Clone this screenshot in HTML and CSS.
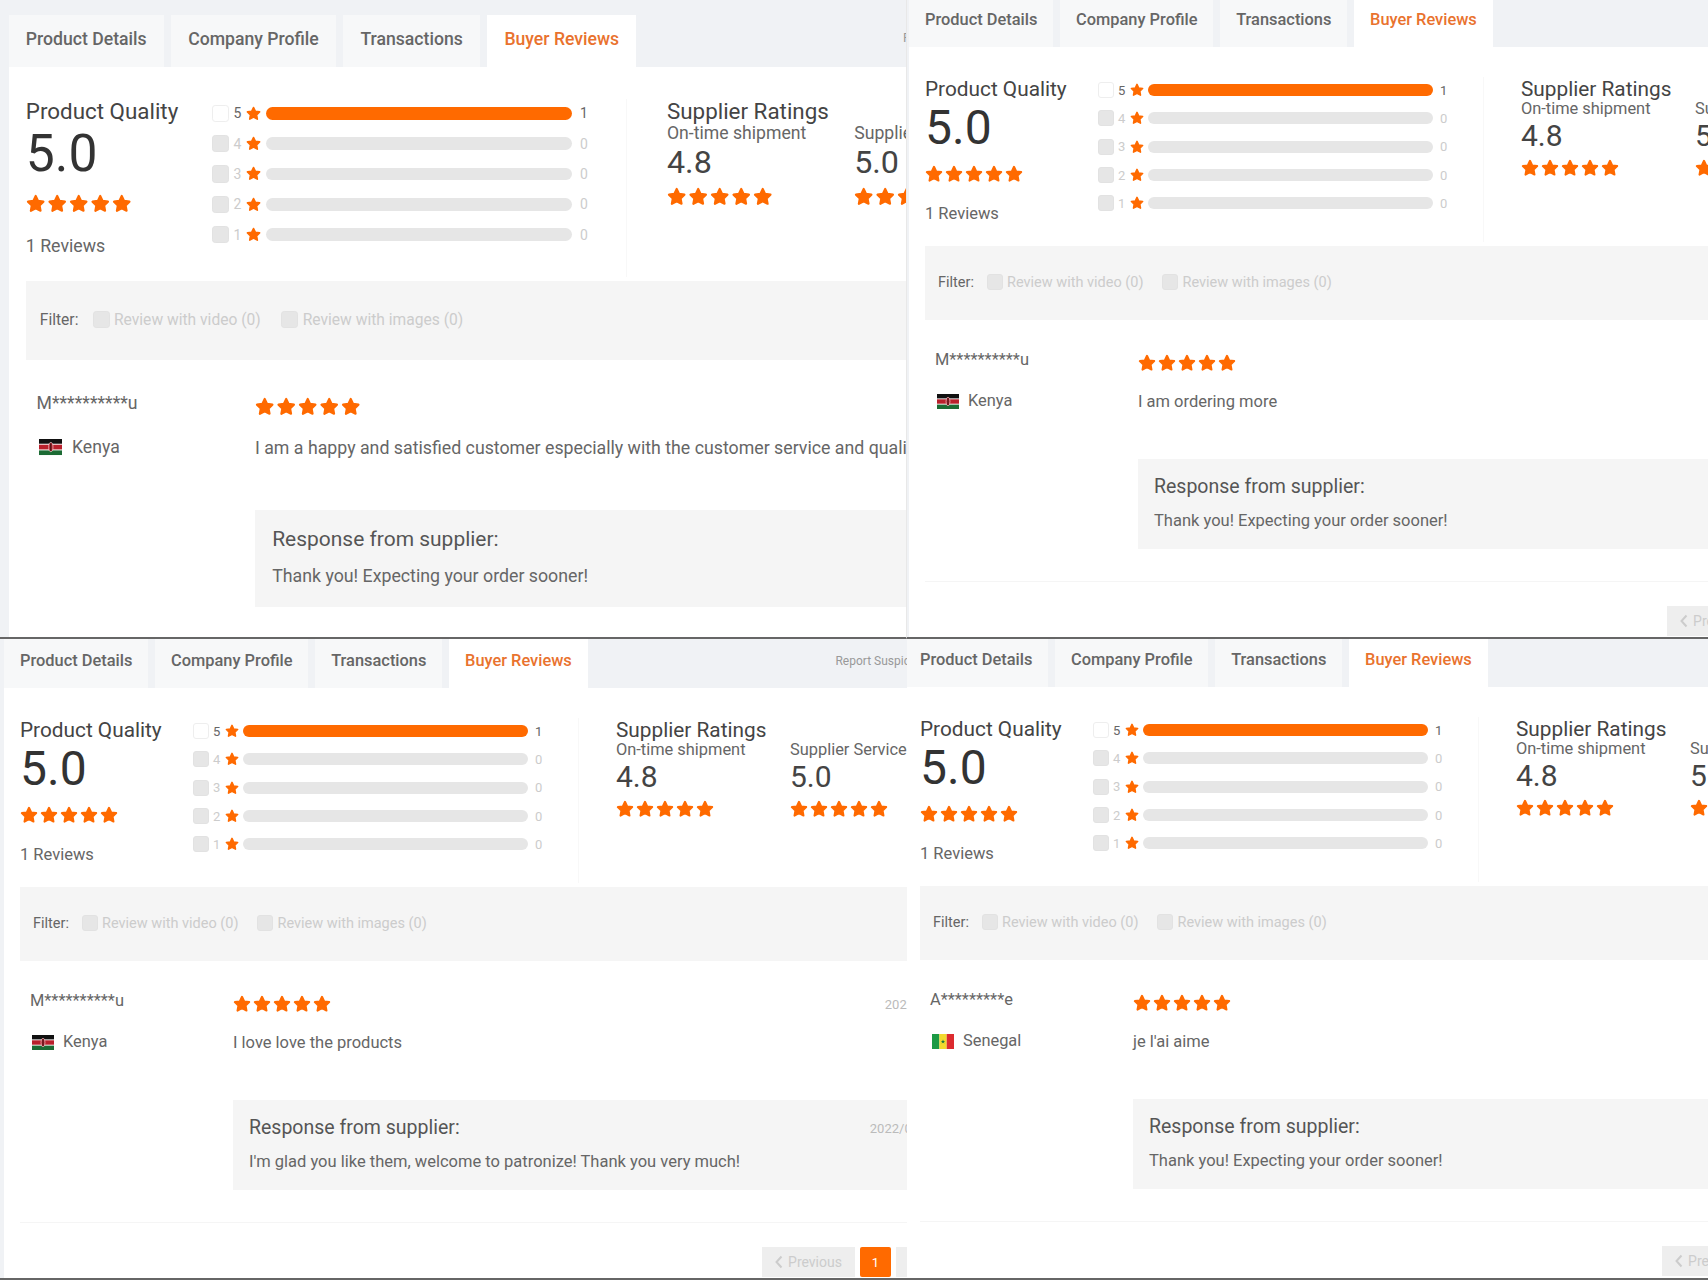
FILE: index.html
```html
<!DOCTYPE html>
<html lang="en">
<head>
    <meta charset="UTF-8">
    <title>Buyer Reviews</title>
    <link rel="stylesheet" href="styles.css">
</head>
<body>

    <!-- iconos compartidos -->
    <svg class="defs" aria-hidden="true">
        <symbol id="star" viewBox="0 0 18 18">
            <path d="M9 1.800l2.200 4.600 5 .7-3.600 3.500.9 5L9 13.200l-4.500 2.400.9-5L1.800 7.100l5-.7z" fill="#ff6a00" stroke="#ff6a00" stroke-width="2" stroke-linejoin="round"/>
        </symbol>
        <symbol id="five-stars" viewBox="0 0 98 18">
            <use href="#star" x="0" width="18" height="18"/>
            <use href="#star" x="20" width="18" height="18"/>
            <use href="#star" x="40" width="18" height="18"/>
            <use href="#star" x="60" width="18" height="18"/>
            <use href="#star" x="80" width="18" height="18"/>
        </symbol>
        <symbol id="flag-ke" viewBox="0 0 22 15">
            <rect width="22" height="15" fill="#fff"/>
            <rect width="22" height="4.400" fill="#111"/>
            <rect y="5.300" width="22" height="4.400" fill="#b9202c"/>
            <rect y="10.600" width="22" height="4.400" fill="#1c6b34"/>
            <ellipse cx="11" cy="7.500" rx="2" ry="4.300" fill="#b9202c" stroke="#fff" stroke-width=".5"/>
            <rect x="10.600" y="4" width=".8" height="7" fill="#111"/>
        </symbol>
        <symbol id="flag-sn" viewBox="0 0 22 15">
            <rect width="7.400" height="15" fill="#1c9a45"/>
            <rect x="7.400" width="7.300" height="15" fill="#f2d92e"/>
            <rect x="14.700" width="7.300" height="15" fill="#dc2b2f"/>
            <path d="M11 5.500l.6 1.500h1.500l-1.200 1 .5 1.500-1.400-.9-1.400.9.500-1.500-1.200-1h1.500z" fill="#1c7a3c"/>
        </symbol>
        <symbol id="chevron" viewBox="0 0 8 14">
            <path d="M6.500 1.500L1.500 7l5 5.500" fill="none" stroke="#ccc" stroke-width="2"/>
        </symbol>
    </svg>

    <div class="board">

        <!-- arriba izquierda -->
        <section class="pane pane-tl">
            <div class="sheet">
                <nav class="tabbar">
                    <a class="tab">Product Details</a>
                    <a class="tab">Company Profile</a>
                    <a class="tab">Transactions</a>
                    <a class="tab tab-active">Buyer Reviews</a>
                    <a class="report">Report Suspicious Activity</a>
                </nav>
                <div class="content">
                    <div class="summary">
                        <div class="quality">
                            <h3 class="summary-title">Product Quality</h3>
                            <div class="score">5.0</div>
                            <svg class="stars"><use href="#five-stars"/></svg>
                            <div class="review-count">1 Reviews</div>
                        </div>
                        <div class="bars">
                            <div class="bar-row bar-row-on"><span class="check check-on"></span><span class="bar-label">5</span><svg class="bar-star"><use href="#star"/></svg><span class="bar"><span class="bar-fill"></span></span><span class="bar-count">1</span></div>
                            <div class="bar-row"><span class="check"></span><span class="bar-label">4</span><svg class="bar-star"><use href="#star"/></svg><span class="bar"></span><span class="bar-count">0</span></div>
                            <div class="bar-row"><span class="check"></span><span class="bar-label">3</span><svg class="bar-star"><use href="#star"/></svg><span class="bar"></span><span class="bar-count">0</span></div>
                            <div class="bar-row"><span class="check"></span><span class="bar-label">2</span><svg class="bar-star"><use href="#star"/></svg><span class="bar"></span><span class="bar-count">0</span></div>
                            <div class="bar-row"><span class="check"></span><span class="bar-label">1</span><svg class="bar-star"><use href="#star"/></svg><span class="bar"></span><span class="bar-count">0</span></div>
                        </div>
                        <div class="supplier">
                            <h3 class="summary-title">Supplier Ratings</h3>
                            <div class="metrics">
                                <div class="metric">
                                    <div class="metric-name">On-time shipment</div>
                                    <div class="metric-score">4.8</div>
                                    <svg class="stars"><use href="#five-stars"/></svg>
                                </div>
                                <div class="metric">
                                    <div class="metric-name">Supplier Service</div>
                                    <div class="metric-score">5.0</div>
                                    <svg class="stars"><use href="#five-stars"/></svg>
                                </div>
                            </div>
                        </div>
                    </div>
                    <div class="filter">
                        <span class="filter-label">Filter:</span>
                        <span class="check"></span><span class="filter-option">Review with video (0)</span>
                        <span class="check"></span><span class="filter-option">Review with images (0)</span>
                    </div>
                    <div class="review">
                        <div class="buyer">
                            <div class="buyer-name">M**********u</div>
                            <div class="buyer-country"><svg class="flag"><use href="#flag-ke"/></svg>Kenya</div>
                        </div>
                        <div class="review-body">
                            <div class="review-top"><svg class="stars"><use href="#five-stars"/></svg><span class="date">2022/06/18</span></div>
                            <p class="review-text">I am a happy and satisfied customer especially with the customer service and quality of the products</p>
                            <div class="response">
                                <div class="response-top"><span class="response-title">Response from supplier:</span><span class="date">2022/06/18</span></div>
                                <p class="response-text">Thank you! Expecting your order sooner!</p>
                            </div>
                        </div>
                    </div>
                </div>
            </div>
        </section>

        <!-- arriba derecha -->
        <section class="pane pane-tr">
            <div class="sheet">
                <nav class="tabbar">
                    <a class="tab">Product Details</a>
                    <a class="tab">Company Profile</a>
                    <a class="tab">Transactions</a>
                    <a class="tab tab-active">Buyer Reviews</a>
                    <a class="report">Report Suspicious Activity</a>
                </nav>
                <div class="content">
                    <div class="summary">
                        <div class="quality">
                            <h3 class="summary-title">Product Quality</h3>
                            <div class="score">5.0</div>
                            <svg class="stars"><use href="#five-stars"/></svg>
                            <div class="review-count">1 Reviews</div>
                        </div>
                        <div class="bars">
                            <div class="bar-row bar-row-on"><span class="check check-on"></span><span class="bar-label">5</span><svg class="bar-star"><use href="#star"/></svg><span class="bar"><span class="bar-fill"></span></span><span class="bar-count">1</span></div>
                            <div class="bar-row"><span class="check"></span><span class="bar-label">4</span><svg class="bar-star"><use href="#star"/></svg><span class="bar"></span><span class="bar-count">0</span></div>
                            <div class="bar-row"><span class="check"></span><span class="bar-label">3</span><svg class="bar-star"><use href="#star"/></svg><span class="bar"></span><span class="bar-count">0</span></div>
                            <div class="bar-row"><span class="check"></span><span class="bar-label">2</span><svg class="bar-star"><use href="#star"/></svg><span class="bar"></span><span class="bar-count">0</span></div>
                            <div class="bar-row"><span class="check"></span><span class="bar-label">1</span><svg class="bar-star"><use href="#star"/></svg><span class="bar"></span><span class="bar-count">0</span></div>
                        </div>
                        <div class="supplier">
                            <h3 class="summary-title">Supplier Ratings</h3>
                            <div class="metrics">
                                <div class="metric">
                                    <div class="metric-name">On-time shipment</div>
                                    <div class="metric-score">4.8</div>
                                    <svg class="stars"><use href="#five-stars"/></svg>
                                </div>
                                <div class="metric">
                                    <div class="metric-name">Supplier Service</div>
                                    <div class="metric-score">5.0</div>
                                    <svg class="stars"><use href="#five-stars"/></svg>
                                </div>
                            </div>
                        </div>
                    </div>
                    <div class="filter">
                        <span class="filter-label">Filter:</span>
                        <span class="check"></span><span class="filter-option">Review with video (0)</span>
                        <span class="check"></span><span class="filter-option">Review with images (0)</span>
                    </div>
                    <div class="review">
                        <div class="buyer">
                            <div class="buyer-name">M**********u</div>
                            <div class="buyer-country"><svg class="flag"><use href="#flag-ke"/></svg>Kenya</div>
                        </div>
                        <div class="review-body">
                            <div class="review-top"><svg class="stars"><use href="#five-stars"/></svg><span class="date">2022/06/18</span></div>
                            <p class="review-text">I am ordering more</p>
                            <div class="response">
                                <div class="response-top"><span class="response-title">Response from supplier:</span><span class="date">2022/06/18</span></div>
                                <p class="response-text">Thank you! Expecting your order sooner!</p>
                            </div>
                        </div>
                    </div>
                    <div class="pager">
                        <a class="page-btn"><svg class="chevron"><use href="#chevron"/></svg>Previous</a>
                        <a class="page-num">1</a>
                        <a class="page-btn">Next</a>
                    </div>
                </div>
            </div>
        </section>

        <!-- abajo izquierda -->
        <section class="pane pane-bl">
            <div class="sheet">
                <nav class="tabbar">
                    <a class="tab">Product Details</a>
                    <a class="tab">Company Profile</a>
                    <a class="tab">Transactions</a>
                    <a class="tab tab-active">Buyer Reviews</a>
                    <a class="report">Report Suspicious Activity</a>
                </nav>
                <div class="content">
                    <div class="summary">
                        <div class="quality">
                            <h3 class="summary-title">Product Quality</h3>
                            <div class="score">5.0</div>
                            <svg class="stars"><use href="#five-stars"/></svg>
                            <div class="review-count">1 Reviews</div>
                        </div>
                        <div class="bars">
                            <div class="bar-row bar-row-on"><span class="check check-on"></span><span class="bar-label">5</span><svg class="bar-star"><use href="#star"/></svg><span class="bar"><span class="bar-fill"></span></span><span class="bar-count">1</span></div>
                            <div class="bar-row"><span class="check"></span><span class="bar-label">4</span><svg class="bar-star"><use href="#star"/></svg><span class="bar"></span><span class="bar-count">0</span></div>
                            <div class="bar-row"><span class="check"></span><span class="bar-label">3</span><svg class="bar-star"><use href="#star"/></svg><span class="bar"></span><span class="bar-count">0</span></div>
                            <div class="bar-row"><span class="check"></span><span class="bar-label">2</span><svg class="bar-star"><use href="#star"/></svg><span class="bar"></span><span class="bar-count">0</span></div>
                            <div class="bar-row"><span class="check"></span><span class="bar-label">1</span><svg class="bar-star"><use href="#star"/></svg><span class="bar"></span><span class="bar-count">0</span></div>
                        </div>
                        <div class="supplier">
                            <h3 class="summary-title">Supplier Ratings</h3>
                            <div class="metrics">
                                <div class="metric">
                                    <div class="metric-name">On-time shipment</div>
                                    <div class="metric-score">4.8</div>
                                    <svg class="stars"><use href="#five-stars"/></svg>
                                </div>
                                <div class="metric">
                                    <div class="metric-name">Supplier Service</div>
                                    <div class="metric-score">5.0</div>
                                    <svg class="stars"><use href="#five-stars"/></svg>
                                </div>
                            </div>
                        </div>
                    </div>
                    <div class="filter">
                        <span class="filter-label">Filter:</span>
                        <span class="check"></span><span class="filter-option">Review with video (0)</span>
                        <span class="check"></span><span class="filter-option">Review with images (0)</span>
                    </div>
                    <div class="review">
                        <div class="buyer">
                            <div class="buyer-name">M**********u</div>
                            <div class="buyer-country"><svg class="flag"><use href="#flag-ke"/></svg>Kenya</div>
                        </div>
                        <div class="review-body">
                            <div class="review-top"><svg class="stars"><use href="#five-stars"/></svg><span class="date">2022/06/18</span></div>
                            <p class="review-text">I love love the products</p>
                            <div class="response">
                                <div class="response-top"><span class="response-title">Response from supplier:</span><span class="date">2022/06/18</span></div>
                                <p class="response-text">I'm glad you like them, welcome to patronize! Thank you very much!</p>
                            </div>
                        </div>
                    </div>
                    <div class="pager">
                        <a class="page-btn"><svg class="chevron"><use href="#chevron"/></svg>Previous</a>
                        <a class="page-num">1</a>
                        <a class="page-btn">Next</a>
                    </div>
                </div>
            </div>
        </section>

        <!-- abajo derecha -->
        <section class="pane pane-br">
            <div class="sheet">
                <nav class="tabbar">
                    <a class="tab">Product Details</a>
                    <a class="tab">Company Profile</a>
                    <a class="tab">Transactions</a>
                    <a class="tab tab-active">Buyer Reviews</a>
                    <a class="report">Report Suspicious Activity</a>
                </nav>
                <div class="content">
                    <div class="summary">
                        <div class="quality">
                            <h3 class="summary-title">Product Quality</h3>
                            <div class="score">5.0</div>
                            <svg class="stars"><use href="#five-stars"/></svg>
                            <div class="review-count">1 Reviews</div>
                        </div>
                        <div class="bars">
                            <div class="bar-row bar-row-on"><span class="check check-on"></span><span class="bar-label">5</span><svg class="bar-star"><use href="#star"/></svg><span class="bar"><span class="bar-fill"></span></span><span class="bar-count">1</span></div>
                            <div class="bar-row"><span class="check"></span><span class="bar-label">4</span><svg class="bar-star"><use href="#star"/></svg><span class="bar"></span><span class="bar-count">0</span></div>
                            <div class="bar-row"><span class="check"></span><span class="bar-label">3</span><svg class="bar-star"><use href="#star"/></svg><span class="bar"></span><span class="bar-count">0</span></div>
                            <div class="bar-row"><span class="check"></span><span class="bar-label">2</span><svg class="bar-star"><use href="#star"/></svg><span class="bar"></span><span class="bar-count">0</span></div>
                            <div class="bar-row"><span class="check"></span><span class="bar-label">1</span><svg class="bar-star"><use href="#star"/></svg><span class="bar"></span><span class="bar-count">0</span></div>
                        </div>
                        <div class="supplier">
                            <h3 class="summary-title">Supplier Ratings</h3>
                            <div class="metrics">
                                <div class="metric">
                                    <div class="metric-name">On-time shipment</div>
                                    <div class="metric-score">4.8</div>
                                    <svg class="stars"><use href="#five-stars"/></svg>
                                </div>
                                <div class="metric">
                                    <div class="metric-name">Supplier Service</div>
                                    <div class="metric-score">5.0</div>
                                    <svg class="stars"><use href="#five-stars"/></svg>
                                </div>
                            </div>
                        </div>
                    </div>
                    <div class="filter">
                        <span class="filter-label">Filter:</span>
                        <span class="check"></span><span class="filter-option">Review with video (0)</span>
                        <span class="check"></span><span class="filter-option">Review with images (0)</span>
                    </div>
                    <div class="review">
                        <div class="buyer">
                            <div class="buyer-name">A*********e</div>
                            <div class="buyer-country"><svg class="flag"><use href="#flag-sn"/></svg>Senegal</div>
                        </div>
                        <div class="review-body">
                            <div class="review-top"><svg class="stars"><use href="#five-stars"/></svg><span class="date">2022/06/18</span></div>
                            <p class="review-text">je l'ai aime</p>
                            <div class="response">
                                <div class="response-top"><span class="response-title">Response from supplier:</span><span class="date">2022/06/18</span></div>
                                <p class="response-text">Thank you! Expecting your order sooner!</p>
                            </div>
                        </div>
                    </div>
                    <div class="pager">
                        <a class="page-btn"><svg class="chevron"><use href="#chevron"/></svg>Previous</a>
                        <a class="page-num">1</a>
                        <a class="page-btn">Next</a>
                    </div>
                </div>
            </div>
        </section>

    </div>
</body>
</html>
```

FILE: styles.css
```css
body {
    margin: 0;
    background-color: #fff;
    font-family: Roboto, Arial, sans-serif;
    color: #666;
}

.defs {
    display: none;
}

.board {
    display: grid;
    grid-template-columns: 907px 801px;
    grid-template-rows: 639px 641px;
    height: 1280px;
    overflow: hidden;
}

.pane {
    overflow: hidden;
    background-color: #f0f2f5;
    border-bottom: 2px solid #666;
    box-sizing: border-box;
}

.sheet {
    width: 1009px;
    padding-left: 4px;
    box-sizing: border-box;
}

/* cada captura tiene su propia escala y recorte */
.pane-tl {
    border-right: 1px solid #e8e8e8;
}

.pane-tl .sheet {
    zoom: 1.076;
    margin: 12px 0 0 4px;
}

.pane-tl .tab {
    margin-top: 2px;
    padding-bottom: 3px;
}

.pane-tr .sheet {
    margin: -3px 0 0 -2px;
}

.pane-bl .sheet {
    margin-top: -1px;
}

.pane-br .sheet {
    margin: -2px 0 0 -7px;
}

/* pestañas */
.tabbar {
    display: flex;
    align-items: stretch;
    gap: 6.7px;
    height: 50px;
}

.tab {
    display: flex;
    align-items: center;
    padding: 0 16px 5px;
    background-color: #f7f8f9;
    font-size: 16.4px;
    font-weight: 500;
    color: #666;
    white-space: nowrap;
}

.tab-active {
    background-color: #fff;
    color: #e9722e;
}

.report {
    display: flex;
    align-items: center;
    margin-left: 241px;
    padding-bottom: 4px;
    font-size: 12px;
    color: #999;
    white-space: nowrap;
}

.content {
    background-color: #fff;
    padding: 0 20px 0 16px;
    height: 620px;
}

/* resumen */
.summary {
    display: flex;
    align-items: flex-start;
    height: 199px;
    padding-top: 30px;
    box-sizing: border-box;
}

.quality {
    width: 173px;
    flex-shrink: 0;
}

.summary-title {
    margin: 0;
    font-size: 20.8px;
    font-weight: 400;
    line-height: 24px;
    color: #444;
}

.score {
    font-size: 48px;
    line-height: 54px;
    color: #333;
}

.stars {
    display: block;
    width: 98px;
    height: 18px;
}

.quality .stars {
    margin-top: 10px;
}

.review-count {
    margin-top: 21px;
    font-size: 16.5px;
    line-height: 20px;
}

.bars {
    width: 385px;
    flex-shrink: 0;
    margin-top: -1px;
}

.bar-row {
    display: flex;
    align-items: center;
    height: 28.3px;
    font-size: 13px;
    color: #ccc;
}

.bar-row-on {
    color: #666;
}

.check {
    display: inline-block;
    width: 16px;
    height: 16px;
    box-sizing: border-box;
    border: 1px solid #e2e2e2;
    border-radius: 3px;
    background-color: #e6e6e6;
    flex-shrink: 0;
}

.check-on {
    background-color: #fff;
    border-color: #eee;
}

.bar-label {
    width: 16px;
    padding-left: 4px;
    box-sizing: border-box;
}

.bar-star {
    width: 14px;
    height: 14px;
    flex-shrink: 0;
}

.bar {
    display: block;
    width: 285px;
    height: 12px;
    margin-left: 4px;
    border-radius: 6px;
    background-color: #e6e6e6;
    overflow: hidden;
}

.bar-fill {
    display: block;
    height: 100%;
    background-color: #ff6a00;
}

.bar-count {
    margin-left: 7px;
}

.supplier {
    height: 165px;
    padding-left: 37px;
    border-left: 1px solid #f8f8f8;
}

.metrics {
    display: flex;
    margin-top: -1px;
}

.metric {
    width: 174px;
}

.metric-name {
    font-size: 16.4px;
    line-height: 18px;
    color: #666;
    white-space: nowrap;
}

.metric-score {
    font-size: 30px;
    line-height: 36px;
    color: #444;
}

.metric .stars {
    margin-top: 5px;
}

/* filtro */
.filter {
    display: flex;
    align-items: center;
    height: 74px;
    padding: 0 0 2px 13px;
    box-sizing: border-box;
    background-color: #f5f5f5;
    font-size: 14.5px;
}

.filter-label {
    width: 49px;
    color: #666;
}

.filter-option {
    margin: 0 19px 0 4px;
    color: #ccc;
}

/* opinión */
.review {
    display: flex;
    padding: 30px 10px 32px;
    border-bottom: 1px solid #f5f5f5;
}

.buyer {
    width: 203px;
    flex-shrink: 0;
    font-size: 16.4px;
    line-height: 20px;
}

.buyer-country {
    display: flex;
    align-items: center;
    margin-top: 21px;
}

.flag {
    width: 22px;
    height: 15px;
    margin: 0 9px 0 2px;
}

.review-body {
    flex-grow: 1;
}

.review-top {
    display: flex;
    justify-content: space-between;
    align-items: center;
    margin-top: 4px;
}

.date {
    font-size: 13px;
    color: #bbb;
    padding-right: 25px;
}

.review-text {
    margin: 20px 0 47px;
    font-size: 16.5px;
    line-height: 20px;
}

.response {
    height: 90px;
    padding: 17px 15px 0 16px;
    box-sizing: border-box;
    background-color: #f5f5f5;
}

.response-top {
    display: flex;
    justify-content: space-between;
    align-items: center;
}

.response-title {
    font-size: 19.5px;
    line-height: 22px;
    color: #555;
}

.response-text {
    margin: 13px 0 0;
    font-size: 16.5px;
    line-height: 20px;
}

/* paginación */
.pager {
    display: flex;
    justify-content: flex-end;
    gap: 5px;
    margin-top: 24px;
    height: 30px;
}

.page-btn {
    display: flex;
    align-items: center;
    justify-content: center;
    gap: 5px;
    width: 93px;
    background-color: #eee;
    font-size: 14px;
    color: #ccc;
}

.page-num {
    display: flex;
    align-items: center;
    justify-content: center;
    width: 31px;
    border-radius: 2px;
    background-color: #ff6a00;
    font-size: 13px;
    color: #fff;
}

.chevron {
    width: 8px;
    height: 14px;
}
```
